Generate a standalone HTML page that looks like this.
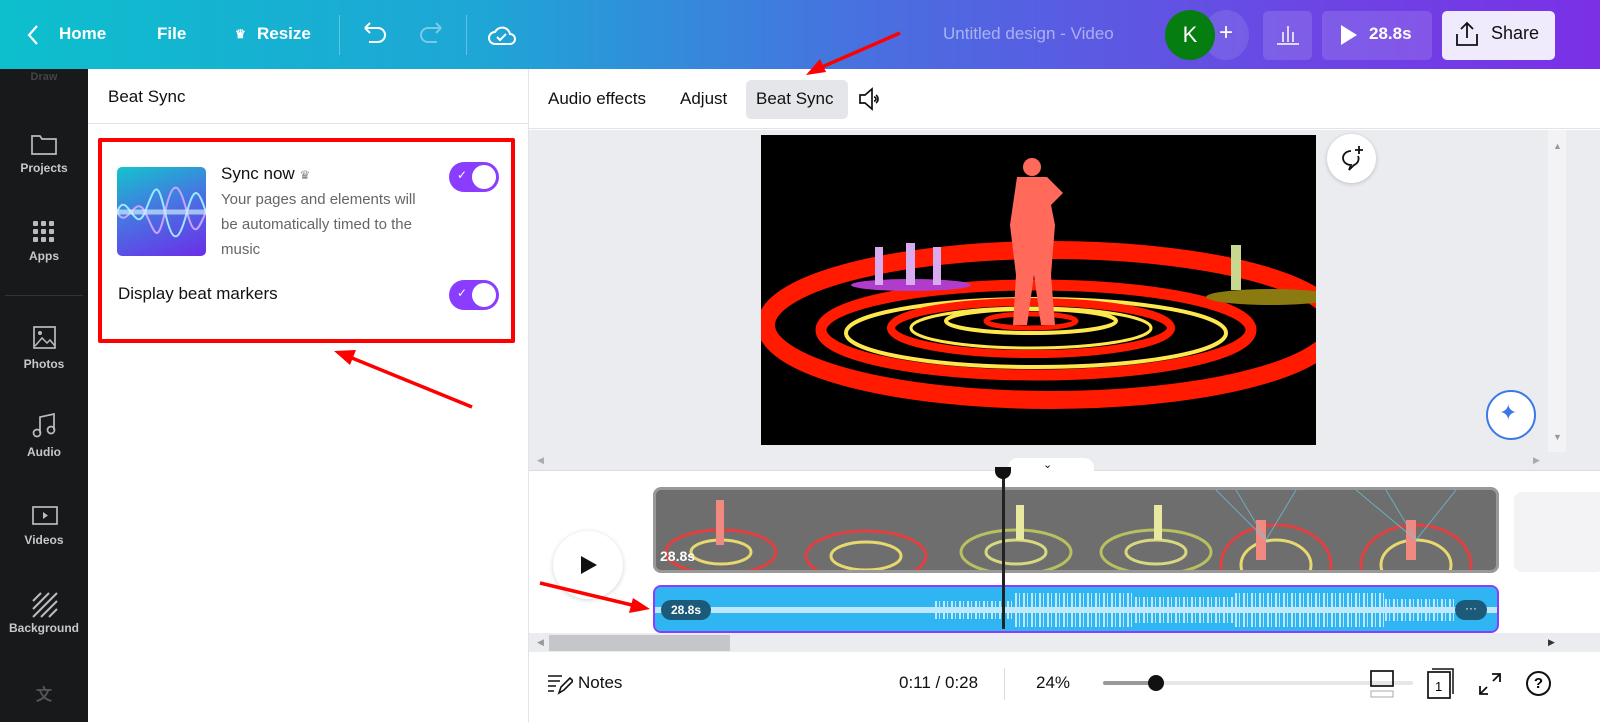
<!DOCTYPE html>
<html><head><meta charset="utf-8"><style>
*{box-sizing:border-box;margin:0;padding:0}
body{width:1600px;height:722px;overflow:hidden;font-family:"Liberation Sans",sans-serif;background:#fff;position:relative}
.abs{position:absolute}
.top{left:0;top:0;width:1600px;height:69px;background:linear-gradient(90deg,#0dbfcd 0%,#1ea6d6 30%,#4a6ee0 55%,#6a48e4 80%,#7b30e6 100%);color:#fff;font-weight:bold;font-size:17px}
.top span{position:absolute;top:24px}
.side{left:0;top:69px;width:88px;height:653px;background:#18191b;color:#c8c8c8;font-size:12px;font-weight:bold;text-align:center}
.side .it{position:absolute;left:0;width:88px}
.panel{left:88px;top:69px;width:441px;height:653px;background:#fff;border-right:1px solid #e2e3e6}
.tog{position:absolute;width:50px;height:30px;border-radius:15px;background:#8b3dff}
.tog::after{content:"";position:absolute;right:3px;top:3px;width:24px;height:24px;border-radius:50%;background:#fff}
.tog::before{content:"✓";position:absolute;left:8px;top:6px;color:#fff;font-size:12px}
.btn{position:absolute;top:11px;height:49px;border-radius:5px;background:rgba(255,255,255,.13)}
.wv{position:absolute;background:repeating-linear-gradient(90deg,#bfe9fb 0 2px,transparent 2px 4px,#bfe9fb 4px 5px,transparent 5px 8px)}
</style></head><body>
<div class="abs top">
<svg class="abs" style="left:26px;top:24px" width="14" height="22"><path d="M11 2L3 11l8 9" stroke="#fff" stroke-width="2.2" fill="none"/></svg>
<span style="left:59px">Home</span><span style="left:157px">File</span>
<span style="left:235px;font-size:12px;top:27px">♛</span><span style="left:257px">Resize</span>
<div class="abs" style="left:339px;top:15px;width:1px;height:40px;background:rgba(255,255,255,.3)"></div>
<svg class="abs" style="left:360px;top:22px" width="30" height="26"><path d="M5 6h13a7 7 0 0 1 0 14H9M5 6l5-5M5 6l5 5" stroke="#fff" stroke-width="2" fill="none"/></svg>
<svg class="abs" style="left:417px;top:22px" width="30" height="26" opacity=".4"><path d="M24 6H11a7 7 0 0 0 0 14h9M24 6l-5-5M24 6l-5 5" stroke="#fff" stroke-width="2" fill="none"/></svg>
<div class="abs" style="left:466px;top:15px;width:1px;height:40px;background:rgba(255,255,255,.3)"></div>
<svg class="abs" style="left:487px;top:22px" width="30" height="26"><path d="M8 22a6 6 0 0 1 0-12 8 8 0 0 1 15 2 5 5 0 0 1 0 10z" stroke="#fff" stroke-width="2" fill="none"/><path d="M10 15l3 3 6-6" stroke="#fff" stroke-width="2" fill="none"/></svg>
<span style="left:943px;color:rgba(255,255,255,.5);font-weight:normal">Untitled design - Video</span>
<div class="abs" style="left:1203px;top:10px;width:46px;height:50px;border-radius:50%;background:rgba(255,255,255,.1)"></div>
<span style="left:1219px;font-size:24px;top:19px;font-weight:normal">+</span>
<div class="abs" style="left:1165px;top:10px;width:50px;height:50px;border-radius:50%;background:#057d10;font-size:22px;font-weight:normal;text-align:center;line-height:50px">K</div>
<div class="btn" style="left:1263px;width:49px"></div>
<svg class="abs" style="left:1275px;top:23px" width="26" height="24"><path d="M2 21h22M8 19V9M13 19V3M18 19V9" stroke="#fff" stroke-width="1.5"/></svg>
<div class="btn" style="left:1322px;width:110px"></div>
<svg class="abs" style="left:1339px;top:24px" width="20" height="22"><path d="M2 1l16 10L2 21z" fill="#fff"/></svg>
<span style="left:1369px">28.8s</span>
<div class="abs" style="left:1442px;top:11px;width:113px;height:49px;border-radius:5px;background:#f0eafd"></div>
<svg class="abs" style="left:1454px;top:21px" width="26" height="26"><path d="M13 17V3M7 8l6-6 6 6M3 13v11h20V13" stroke="#111" stroke-width="1.8" fill="none"/></svg>
<span style="left:1491px;color:#111;font-weight:normal;font-size:18px;top:23px">Share</span>
</div>

<div class="abs side">
<div class="it" style="top:2px;color:#444;font-size:11px">Draw</div>
<svg class="abs" style="left:31px;top:64px" width="26" height="22"><path d="M1 3h8l2 3h14v15H1z" stroke="#bbb" stroke-width="1.7" fill="none"/></svg>
<div class="it" style="top:92px">Projects</div>
<svg class="abs" style="left:32px;top:151px" width="24" height="24" fill="#bbb"><rect x="1" y="1" width="5" height="5" rx="1"/><rect x="9" y="1" width="5" height="5" rx="1"/><rect x="17" y="1" width="5" height="5" rx="1"/><rect x="1" y="9" width="5" height="5" rx="1"/><rect x="9" y="9" width="5" height="5" rx="1"/><rect x="17" y="9" width="5" height="5" rx="1"/><rect x="1" y="17" width="5" height="5" rx="1"/><rect x="9" y="17" width="5" height="5" rx="1"/><rect x="17" y="17" width="5" height="5" rx="1"/></svg>
<div class="it" style="top:180px">Apps</div>
<div class="abs" style="left:5px;top:226px;width:78px;height:1px;background:#333"></div>
<svg class="abs" style="left:33px;top:257px" width="24" height="24"><rect x="1" y="1" width="21" height="21" stroke="#bbb" stroke-width="1.7" fill="none"/><path d="M2 20l7-8 5 5 3-3 5 6" stroke="#bbb" stroke-width="1.5" fill="none"/><circle cx="7" cy="7" r="2" fill="#bbb"/></svg>
<div class="it" style="top:288px">Photos</div>
<svg class="abs" style="left:32px;top:344px" width="24" height="26"><path d="M8 20V4l14-3v16" stroke="#bbb" stroke-width="1.7" fill="none"/><circle cx="5" cy="20" r="3.5" stroke="#bbb" stroke-width="1.7" fill="none"/><circle cx="19" cy="17" r="3.5" stroke="#bbb" stroke-width="1.7" fill="none"/></svg>
<div class="it" style="top:376px">Audio</div>
<svg class="abs" style="left:32px;top:437px" width="26" height="20"><rect x="1" y="1" width="24" height="17" stroke="#bbb" stroke-width="1.7" fill="none"/><path d="M11 6l5 3.5-5 3.5z" fill="#bbb"/></svg>
<div class="it" style="top:464px">Videos</div>
<svg class="abs" style="left:32px;top:523px" width="26" height="26"><path d="M1 9L9 1M1 17L17 1M1 25L25 1M9 25L25 9M17 25l8-8" stroke="#bbb" stroke-width="2"/></svg>
<div class="it" style="top:552px">Background</div>
<div class="it" style="top:612px;color:#555;font-size:16px">文</div>
</div>

<div class="abs panel">
<div class="abs" style="left:20px;top:18px;font-size:17px;color:#111">Beat Sync</div>
<div class="abs" style="left:0;top:54px;width:440px;height:1px;background:#e2e3e6"></div>
</div>
<div class="abs" style="left:98px;top:138px;width:417px;height:205px;border:4px solid #f00;border-radius:2px"></div>
<div class="abs" style="left:117px;top:167px;width:89px;height:89px;border-radius:5px;background:linear-gradient(160deg,#13c4cc,#4a6fe3 50%,#6b2ee8)">
<svg width="89" height="89"><g fill="none" stroke-width="2"><path d="M0 45 C10 20,18 70,28 45 S40 10,48 45 S62 75,70 45 S82 25,89 45" stroke="#9de8ff"/><path d="M0 45 C10 65,18 25,28 45 S40 80,48 45 S62 15,70 45 S82 60,89 45" stroke="#c6a5ff"/><path d="M0 45h89" stroke="#dff" stroke-width="5" opacity=".6"/></g></svg></div>
<div class="abs" style="left:221px;top:164px;font-size:17px;color:#111">Sync now <span style="color:#888;font-size:12px">♛</span></div>
<div class="abs" style="left:221px;top:187px;width:208px;font-size:15px;line-height:25px;color:#666">Your pages and elements will be automatically timed to the music</div>
<div class="tog" style="left:449px;top:162px"></div>
<div class="abs" style="left:118px;top:284px;font-size:17px;color:#111">Display beat markers</div>
<div class="tog" style="left:449px;top:280px"></div>

<div class="abs" style="left:529px;top:69px;width:1071px;height:60px;background:#fff;border-bottom:1px solid #e2e3e6"></div>
<div class="abs" style="left:548px;top:89px;font-size:17px;color:#111">Audio effects</div>
<div class="abs" style="left:680px;top:89px;font-size:17px;color:#111">Adjust</div>
<div class="abs" style="left:746px;top:80px;width:102px;height:39px;border-radius:5px;background:#e5e6e9"></div>
<div class="abs" style="left:756px;top:89px;font-size:17px;color:#111">Beat Sync</div>
<svg class="abs" style="left:858px;top:87px" width="26" height="24"><path d="M2 8h5l7-6v20l-7-6H2z" stroke="#111" stroke-width="1.7" fill="none"/><path d="M18 8a5 5 0 0 1 0 8M16 10a2 2 0 0 1 0 4" stroke="#111" stroke-width="1.7" fill="none"/></svg>

<div class="abs" style="left:529px;top:130px;width:1071px;height:340px;background:#ebecf0"></div>
<div class="abs" style="left:1548px;top:130px;width:18px;height:322px;background:#f3f3f5"></div>
<div class="abs" style="left:1553px;top:141px;color:#999;font-size:9px">▲</div>
<div class="abs" style="left:1553px;top:432px;color:#999;font-size:9px">▼</div>
<div class="abs" style="left:761px;top:135px;width:555px;height:310px;background:#000;overflow:hidden">
<svg width="555" height="310"><g fill="none">
<ellipse cx="290" cy="190" rx="285" ry="75" stroke="#ff1a00" stroke-width="18"/>
<ellipse cx="275" cy="195" rx="215" ry="45" stroke="#ff1a00" stroke-width="11"/>
<ellipse cx="275" cy="198" rx="190" ry="34" stroke="#ffe84d" stroke-width="4"/>
<ellipse cx="270" cy="193" rx="140" ry="26" stroke="#ff1a00" stroke-width="8"/>
<ellipse cx="270" cy="193" rx="120" ry="20" stroke="#ffe84d" stroke-width="3"/>
<ellipse cx="270" cy="186" rx="85" ry="12" stroke="#ffe84d" stroke-width="4"/>
<ellipse cx="270" cy="186" rx="45" ry="7" stroke="#ff1a00" stroke-width="5"/>
</g>
<ellipse cx="150" cy="150" rx="60" ry="6" fill="#b03ccc"/>
<ellipse cx="510" cy="162" rx="65" ry="8" fill="#8a7a10"/>
<g fill="#d8aaf0"><rect x="114" y="112" width="8" height="38"/><rect x="145" y="108" width="9" height="42"/><rect x="172" y="112" width="8" height="38"/></g>
<rect x="470" y="110" width="10" height="45" fill="#c8d890"/>
<circle cx="271" cy="32" r="9" fill="#ff6a5a"/>
<path d="M256 42h30l16 16-12 12 4 20-4 50 4 50h-14l-7-50-7 50h-14l3-50-6-50z" fill="#ff6a5a"/>
</svg></div>
<div class="abs" style="left:1327px;top:134px;width:49px;height:49px;border-radius:50%;background:#fff;box-shadow:0 1px 4px rgba(0,0,0,.2)"></div>
<svg class="abs" style="left:1337px;top:144px" width="30" height="30"><path d="M14 7a8 7 0 1 0 0 14l-2 5 5-5a8 7 0 0 0 4-9" stroke="#111" stroke-width="1.8" fill="none"/><path d="M22 2v8M18 6h8" stroke="#111" stroke-width="1.8"/></svg>
<div class="abs" style="left:1486px;top:390px;width:50px;height:50px;border-radius:50%;background:#fff;border:2px solid #3b78e7"></div>
<div class="abs" style="left:1499px;top:400px;color:#3b78e7;font-size:22px">✦</div>

<div class="abs" style="left:529px;top:452px;width:1071px;height:19px;background:#ebecf0;border-bottom:1px solid #ddd"></div>
<div class="abs" style="left:537px;top:455px;color:#aaa;font-size:9px">◀</div>
<div class="abs" style="left:1533px;top:455px;color:#aaa;font-size:9px">▶</div>
<div class="abs" style="left:1008px;top:458px;width:86px;height:14px;border-radius:10px 10px 0 0;background:#fff"></div>
<div class="abs" style="left:1043px;top:458px;font-size:11px;color:#111">⌄</div>

<div class="abs" style="left:529px;top:471px;width:1071px;height:162px;background:#fff"></div>
<div class="abs" style="left:553px;top:531px;width:70px;height:68px;border-radius:50%;background:#fff;box-shadow:0 1px 5px rgba(0,0,0,.18)"></div>
<svg class="abs" style="left:580px;top:555px" width="18" height="20"><path d="M1 1l16 9-16 9z" fill="#111"/></svg>
<div class="abs" style="left:653px;top:487px;width:846px;height:86px;border:3px solid #999;border-radius:8px;background:#6e6e6e;overflow:hidden">
<svg width="840" height="80"><g fill="none" stroke-width="3">
<ellipse cx="65" cy="62" rx="55" ry="22" stroke="#e24040"/><ellipse cx="65" cy="62" rx="30" ry="12" stroke="#e8d870"/>
<ellipse cx="210" cy="66" rx="60" ry="25" stroke="#e24040"/><ellipse cx="210" cy="66" rx="35" ry="14" stroke="#e8d870"/>
<ellipse cx="360" cy="62" rx="55" ry="22" stroke="#b8c060"/><ellipse cx="360" cy="62" rx="30" ry="12" stroke="#d8d880"/>
<ellipse cx="500" cy="62" rx="55" ry="22" stroke="#b8c060"/><ellipse cx="500" cy="62" rx="30" ry="12" stroke="#d8d880"/>
<ellipse cx="620" cy="75" rx="55" ry="40" stroke="#e24040"/><ellipse cx="620" cy="75" rx="35" ry="25" stroke="#e8d870"/>
<ellipse cx="760" cy="75" rx="55" ry="40" stroke="#e24040"/><ellipse cx="760" cy="75" rx="35" ry="25" stroke="#e8d870"/>
</g><g fill="#f08a80"><rect x="60" y="10" width="8" height="45"/><rect x="600" y="30" width="10" height="40"/><rect x="750" y="30" width="10" height="40"/></g>
<g fill="#e8e8a0"><rect x="360" y="15" width="8" height="35"/><rect x="498" y="15" width="8" height="35"/></g>
<g stroke="#6ac8e8" stroke-width="1" opacity=".7"><path d="M560 0l50 50M580 0l30 50M640 0l-30 50M700 0l60 50M730 0l30 50M800 0l-40 50"/></g></svg>
<div class="abs" style="left:4px;top:58px;color:#fff;font-size:14px;font-weight:bold">28.8s</div></div>
<div class="abs" style="left:1514px;top:492px;width:90px;height:80px;border-radius:8px;background:#f3f3f5"></div>
<div class="abs" style="left:653px;top:585px;width:846px;height:48px;border:2px solid #8b3dff;border-radius:8px;background:#2fb6f2;overflow:hidden">
<div class="abs" style="left:0;top:20px;width:842px;height:6px;background:#bfe9fb"></div>
<div class="wv" style="left:280px;top:14px;width:80px;height:18px"></div>
<div class="wv" style="left:360px;top:6px;width:120px;height:34px"></div>
<div class="wv" style="left:480px;top:10px;width:100px;height:26px"></div>
<div class="wv" style="left:580px;top:6px;width:150px;height:34px"></div>
<div class="wv" style="left:730px;top:12px;width:70px;height:22px"></div>
<div class="abs" style="left:0;top:0;width:842px;height:4px;background:#2fb6f2"></div>
<div class="abs" style="left:6px;top:13px;width:50px;height:20px;border-radius:10px;background:#1d5a7a;color:#fff;font-size:12px;font-weight:bold;text-align:center;line-height:20px">28.8s</div>
<div class="abs" style="left:800px;top:13px;width:32px;height:20px;border-radius:10px;background:#1d5a7a;color:#fff;font-size:12px;text-align:center;line-height:17px">···</div></div>
<div class="abs" style="left:1002px;top:474px;width:3px;height:155px;background:#222"></div>
<div class="abs" style="left:995px;top:467px;width:16px;height:12px;border-radius:0 0 8px 8px;background:#111"></div>

<div class="abs" style="left:529px;top:633px;width:1071px;height:19px;background:#ebecf0"></div>
<div class="abs" style="left:549px;top:635px;width:181px;height:16px;background:#c5c6c9"></div>
<div class="abs" style="left:537px;top:637px;color:#999;font-size:9px">◀</div>
<div class="abs" style="left:1548px;top:637px;color:#333;font-size:9px">▶</div>

<svg class="abs" style="left:547px;top:673px" width="26" height="22"><path d="M1 3h14M1 8h12M1 13h8M1 18h6" stroke="#111" stroke-width="1.6"/><path d="M12 20l2-6 9-9 3 3-9 9z" stroke="#111" stroke-width="1.6" fill="none"/></svg>
<div class="abs" style="left:578px;top:673px;font-size:17px;color:#111">Notes</div>
<div class="abs" style="left:899px;top:673px;font-size:17px;color:#111">0:11 / 0:28</div>
<div class="abs" style="left:1004px;top:668px;width:1px;height:32px;background:#ddd"></div>
<div class="abs" style="left:1036px;top:673px;font-size:17px;color:#111">24%</div>
<div class="abs" style="left:1103px;top:681px;width:310px;height:4px;border-radius:2px;background:#e6e6e9"></div>
<div class="abs" style="left:1103px;top:681px;width:54px;height:4px;border-radius:2px;background:#999"></div>
<div class="abs" style="left:1148px;top:675px;width:16px;height:16px;border-radius:50%;background:#111"></div>
<svg class="abs" style="left:1368px;top:669px" width="28" height="30"><rect x="3" y="2" width="22" height="15" stroke="#111" stroke-width="1.7" fill="none"/><path d="M3 22h22v6H3z" stroke="#aaa" fill="none"/></svg>
<svg class="abs" style="left:1426px;top:667px" width="30" height="32"><rect x="2" y="5" width="22" height="26" stroke="#111" stroke-width="1.7" fill="none"/><path d="M6 2h21v25" stroke="#111" stroke-width="1.5" fill="none"/><text x="9" y="24" font-size="13" font-family="Liberation Sans">1</text></svg>
<svg class="abs" style="left:1478px;top:672px" width="24" height="24"><path d="M14 2h8v8M22 2l-7 7M10 22H2v-8M2 22l7-7" stroke="#111" stroke-width="1.8" fill="none"/></svg>
<div class="abs" style="left:1526px;top:671px;width:25px;height:25px;border-radius:50%;border:2px solid #111;text-align:center;font-size:15px;line-height:22px;font-weight:bold">?</div>

<svg class="abs" style="left:0;top:0" width="1600" height="722" fill="#f00">
<path d="M900 33L822 67" stroke="#f00" stroke-width="3.5"/><path d="M806 75l14-16 6 13z"/>
<path d="M472 407L352 358" stroke="#f00" stroke-width="3.5"/><path d="M334 351l22-1-6 15z"/>
<path d="M540 583L632 605" stroke="#f00" stroke-width="3.5"/><path d="M650 609l-21 4 4-15z"/>
</svg>
</body></html>
